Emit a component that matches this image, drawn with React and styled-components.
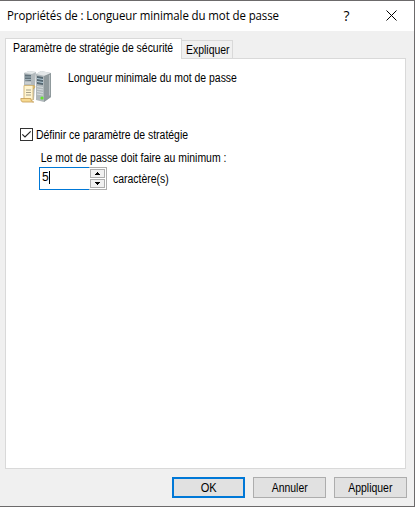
import React from "react";
import styled, { createGlobalStyle } from "styled-components";

const GlobalStyle = createGlobalStyle`
  *, *::before, *::after { box-sizing: border-box; }
  body { margin: 0; background: #fff; }
`;

const Dialog = styled.main`
  display: flex;
  flex-direction: column;
  width: 415px;
  height: 507px;
  border: solid #6c6a6b;
  border-width: 1px 1px 1px 0;
  background: #f0f0f0;
  color: #000;
  font: 12px/14px "Liberation Sans", Arial, sans-serif;
  white-space: nowrap;
`;

const Label = styled.span`
  display: inline-block;
  transform: scaleX(${(p) => p.$stretch || 0.87});
  transform-origin: ${(p) => (p.$centered ? "center" : "left")};
`;

const TitleBar = styled.header`
  display: flex;
  align-items: center;
  height: 30px;
  flex: none;
  padding: 0 17px 0 7px;
  background: #fff;
`;

const Title = styled.h1`
  flex: 1;
  margin: 0;
  font: 400 12px/16px "Open Sans", "Noto Sans", sans-serif;
  letter-spacing: -0.1px;
`;

const WindowButton = styled.button`
  display: flex;
  justify-content: center;
  width: 11px;
  margin-left: ${(p) => p.$gap || 0}px;
  padding: 0;
  border: 0;
  background: none;
  color: #000;
  font: 400 14px/16px "Open Sans", sans-serif;
  svg { margin-bottom: 2px; }
`;

const Tabs = styled.nav`
  display: flex;
  align-items: flex-end;
  height: 27px;
  flex: none;
  padding-left: 5px;
`;

const Tab = styled.button`
  position: relative;
  z-index: ${(p) => (p.$active ? 1 : 0)};
  width: ${(p) => p.$width}px;
  height: ${(p) => (p.$active ? 21 : 18)}px;
  margin: 0 0 ${(p) => (p.$active ? -1 : 0)}px;
  padding: ${(p) => (p.$active ? "0 0 2px 7px" : "1px 0 0 4px")};
  border: 1px solid #d9d9d9;
  border-bottom: 0;
  border-left-width: ${(p) => (p.$active ? 1 : 0)}px;
  background: ${(p) => (p.$active ? "#fff" : "#f0f0f0")};
  color: #000;
  font: inherit;
  text-align: left;
`;

const Panel = styled.section`
  width: 401px;
  height: 411px;
  flex: none;
  margin-left: 5px;
  padding: 11px 14px;
  border: 1px solid #d9d9d9;
  background: #fff;
`;

const Heading = styled.div`
  display: flex;
  gap: 16px;
  height: 58px;
  svg { flex: none; }
  span { height: 16px; padding-top: 1px; }
`;

const CheckRow = styled.label`
  display: flex;
  align-items: center;
  gap: 3px;
  height: 13px;
`;

const CheckBox = styled.span`
  display: flex;
  width: 13px;
  height: 13px;
  border: 1px solid #333;
  background: #fff;
`;

const Setting = styled.div`
  display: flex;
  flex-direction: column;
  gap: 2px;
  padding: 10px 0 0 19px;
  & > span { padding-left: 2px; }
`;

const InputRow = styled.div`
  display: flex;
  align-items: center;
  gap: 6px;
  & > span { padding-top: 1px; }
`;

const SpinBox = styled.div`
  display: flex;
  width: 68px;
  height: 23px;
`;

const Field = styled.div`
  display: flex;
  width: 50px;
  padding: 2px 0 0 2px;
  border: 1px solid #0078d7;
  border-right: 0;
`;

const Caret = styled.i`
  width: 1px;
  height: 13px;
  margin-top: 1px;
  background: #000;
`;

const Arrows = styled.div`
  display: flex;
  flex-direction: column;
  gap: 1px;
  width: 18px;
  padding: 1px;
  border: 1px solid #adadad;
  border-left: 0;
`;

const ArrowButton = styled.button`
  display: flex;
  align-items: center;
  justify-content: center;
  flex: 1;
  padding: 0;
  border: 1px solid #adadad;
  background: #f0f0f0;
`;

const Actions = styled.footer`
  display: flex;
  justify-content: flex-end;
  gap: 8px;
  padding: 8px 7px 0 0;
`;

const ActionButton = styled.button`
  width: 73px;
  height: 21px;
  padding: 0;
  border: ${(p) => (p.$primary ? "2px solid #0078d7" : "1px solid #adadad")};
  background: #e1e1e1;
  color: #000;
  font: inherit;
`;

function ServerIcon() {
  return (
    <svg width="32" height="34" viewBox="0 0 32 34">
      <path d="M4 3 9 1l7 1-2 28-10-2z" fill="#b3babd" />
      <path d="m4 3 5-2 7 1-4 2z" fill="#e5e9ea" />
      <path d="M5 4.500l6 .5v6l-6-.5z" fill="#62727b" />
      <path d="M5 7h6M5 9.500h6" stroke="#b4c4cc" strokeWidth=".8" />
      <path d="M5 13h6M5 15.500h6" stroke="#e1e5e6" />
      <path d="M16 4 21 1l10 2v24l-7 5-8-2z" fill="#b0b8bb" />
      <path d="m16 4 5-3 10 2-6 3z" fill="#e3e7e8" />
      <path d="m24 6 7-3v24l-7 5z" fill="#8f999c" />
      <path d="m29 5 1 0v20l-1 1z" fill="#b9c0c2" />
      <path d="m17 6 6 1v8l-6-1z" fill="#566872" />
      <path d="m17 8.500 6 1M17 11.500l6 1" stroke="#b9d0dc" />
      <path d="m17 16.500 6 1M17 19l6 1M17 21.500l6 1M17 24l6 1" stroke="#d6dcde" />
      <circle cx="22" cy="28" r="1.6" fill="#62e52b" />
      <path d="M4 15.500h9c2 0 2 3 0 3V30H4z" fill="#fff4cf" stroke="#d2b77c" />
      <path d="M13 15.500c2-.5 3 2.500 0 3z" fill="#e8c876" stroke="#bd9c58" strokeWidth=".6" />
      <path d="M.8 28.500h10c0 2 1 3.500 3 3.500h-11c-1.500 0-2-2-2-3.500z" fill="#f6d991" stroke="#c49b50" strokeWidth=".8" />
      <path d="M6 20h5M6 22.500h5M6 25h5" stroke="#a6a08a" />
    </svg>
  );
}

function SpinArrow({ down }) {
  return (
    <svg width="5" height="3" viewBox="0 0 5 3" shapeRendering="crispEdges">
      <path d={down ? "M0 0h5v1h-1v1h-1v1h-1v-1h-1v-1h-1z" : "M2 0h1v1h1v1h1v1h-5v-1h1v-1h1z"} />
    </svg>
  );
}

export default function App() {
  return (
    <>
      <GlobalStyle />
      <Dialog>
        <TitleBar>
          <Title><Label $stretch={0.955}>Propriétés de : Longueur minimale du mot de passe</Label></Title>
          <WindowButton aria-label="Aide">?</WindowButton>
          <WindowButton aria-label="Fermer" $gap={34}>
            <svg width="11" height="11" viewBox="0 0 11 11">
              <path d="m.5.5 10 10m0-10-10 10" stroke="#000" />
            </svg>
          </WindowButton>
        </TitleBar>
        <Tabs>
          <Tab $active $width={177}><Label>Paramètre de stratégie de sécurité</Label></Tab>
          <Tab $width={51}><Label>Expliquer</Label></Tab>
        </Tabs>
        <Panel>
          <Heading>
            <ServerIcon />
            <Label>Longueur minimale du mot de passe</Label>
          </Heading>
          <CheckRow>
            <CheckBox>
              <svg width="11" height="11" viewBox="0 0 11 11">
                <path d="m1.3 5.3 2.7 2.7 5.7-5.7" fill="none" stroke="#222" strokeWidth="1.2" />
              </svg>
            </CheckBox>
            <Label>Définir ce paramètre de stratégie</Label>
          </CheckRow>
          <Setting>
            <Label>Le mot de passe doit faire au minimum :</Label>
            <InputRow>
              <SpinBox>
                <Field>5<Caret /></Field>
                <Arrows>
                  <ArrowButton aria-label="Augmenter"><SpinArrow /></ArrowButton>
                  <ArrowButton aria-label="Diminuer"><SpinArrow down /></ArrowButton>
                </Arrows>
              </SpinBox>
              <Label>caractère(s)</Label>
            </InputRow>
          </Setting>
        </Panel>
        <Actions>
          <ActionButton $primary><Label $centered $stretch={0.92}>OK</Label></ActionButton>
          <ActionButton><Label $centered>Annuler</Label></ActionButton>
          <ActionButton><Label $centered>Appliquer</Label></ActionButton>
        </Actions>
      </Dialog>
    </>
  );
}
